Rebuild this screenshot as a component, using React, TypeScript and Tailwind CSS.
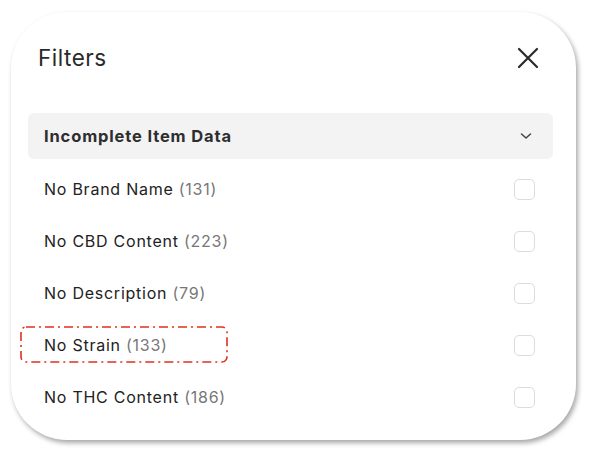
import React from "react";

const items = [
  { label: "No Brand Name", count: 131 },
  { label: "No CBD Content", count: 223 },
  { label: "No Description", count: 79 },
  { label: "No Strain", count: 133, marked: true },
  { label: "No THC Content", count: 186 },
];

export default function App() {
  return (
    <div
      className="w-[593px] h-[454px] bg-white pl-[11px] pt-[12px]"
      style={{ fontFamily: "Inter, 'Noto Sans', sans-serif" }}
    >
      <div className="w-[565px] h-[428px] bg-white rounded-[56px] shadow-[2px_3px_5px_rgba(0,0,0,0.35)] pl-[17px] pr-[23px] pt-[28px]">
        <div className="flex items-center justify-between h-[36px] pl-[10px] pr-[14px]">
          <span className="text-[22.5px] tracking-[0.5px] text-[#2a2a2a]">Filters</span>
          <svg width="22" height="22" viewBox="0 0 22 22" className="text-[#2a2a2a]">
            <path d="M2 2 L20 20 M20 2 L2 20" stroke="currentColor" strokeWidth="2.2" strokeLinecap="round" />
          </svg>
        </div>
        <div className="mt-[37px] h-[46px] rounded-[6px] bg-[#f3f3f3] flex items-center justify-between pl-[16px] pr-[21px]">
          <span className="text-[16.5px] font-bold tracking-[0.85px] text-[#2e2e2e]">Incomplete Item Data</span>
          <svg width="12" height="8" viewBox="0 0 12 8" className="text-[#444]">
            <path d="M1.5 2 L6 6 L10.5 2" fill="none" stroke="currentColor" strokeWidth="1.5" strokeLinecap="round" strokeLinejoin="round" />
          </svg>
        </div>
        <div className="mt-[4px] flex flex-col">
          {items.map((it) => (
            <div key={it.label} className="relative h-[52px] flex items-center justify-between pl-[16px] pr-[18px]">
              <span className="text-[16px] tracking-[0.75px] text-[#222]">
                {it.label} <span className="text-[#777]">({it.count})</span>
              </span>
              <div className="w-[21px] h-[21px] rounded-[5px] border border-[#dcdcdc] bg-white" />
              {it.marked && (
                <svg className="absolute left-[-8px] top-[7px]" width="208" height="37" viewBox="0 0 208 37">
                  <rect x="1" y="1" width="206" height="35" rx="5" fill="none" stroke="#e0301e" strokeWidth="1.6" strokeDasharray="9 4 2 4" />
                </svg>
              )}
            </div>
          ))}
        </div>
      </div>
    </div>
  );
}
